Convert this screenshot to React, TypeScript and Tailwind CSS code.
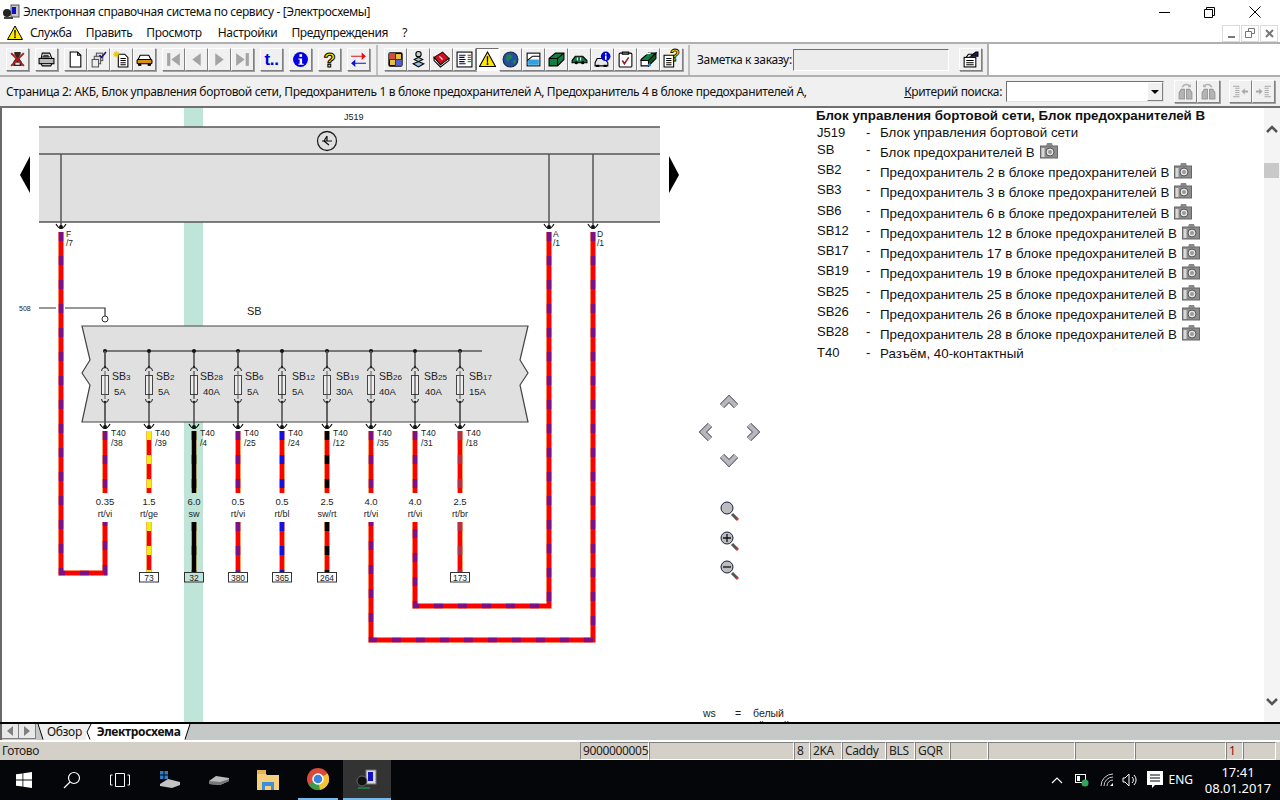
import React from "react";

const ToolBtn: React.FC<{ pressed?: boolean; children?: React.ReactNode; className?: string }> = ({ pressed, children, className }) => (
  <div
    className={`flex h-[23px] w-[23px] shrink-0 items-center justify-center border ${
      pressed
        ? "border-t-[#707070] border-l-[#707070] border-r-white border-b-white bg-white"
        : "border-t-white border-l-white border-r-[#808080] border-b-[#808080] bg-[#f0f0f0] shadow-[1px_1px_0_#a0a0a0]"
    } ${className ?? ""}`}
  >
    {children}
  </div>
);

const Ico: React.FC<{ children: React.ReactNode }> = ({ children }) => (
  <svg width="17" height="17" viewBox="0 0 16 16">
    {children}
  </svg>
);

const ExitIco = () => (
  <Ico>
    <path d="M5 1h6v2l-2 3 3 4v4H4v-4l3-4-2-3z" fill="#3a2020" />
    <path d="M2 2l12 12M14 2L2 14" stroke="#b01818" strokeWidth="1.800" />
    <rect x="6" y="11" width="4" height="2" fill="#ddd" />
  </Ico>
);

const Printer = () => (
  <Ico>
    <path d="M4 2h7l2 5H3z" fill="#fff" stroke="#000" />
    <rect x="1" y="7" width="14" height="5" fill="#bbb" stroke="#000" />
    <path d="M3 12h10l-1 2H4z" fill="#fff" stroke="#000" />
    <path d="M5 4h5M4 5.500h7" stroke="#000" />
  </Ico>
);

const Doc = () => (
  <Ico>
    <path d="M3 1h7l3 3v11H3z" fill="#fff" stroke="#000" />
    <path d="M10 1v3h3" fill="none" stroke="#000" />
  </Ico>
);

const Docs = () => (
  <Ico>
    <rect x="6" y="2" width="6" height="7" fill="#ddd" stroke="#555" />
    <rect x="4" y="5" width="6" height="7" fill="#ddd" stroke="#555" />
    <rect x="2" y="8" width="6" height="7" fill="#eee" stroke="#555" />
    <path d="M9 4l2 2 4-5" fill="none" stroke="#201080" strokeWidth="1.500" />
  </Ico>
);

const DocStar = () => (
  <Ico>
    <path d="M5 3h6l3 3v9H5z" fill="#fff" stroke="#000" />
    <path d="M7 7h5M7 9h5M7 11h5M7 13h5" stroke="#000" />
    <path d="M0 3h6M3 0v6M1 1l4 4M5 1L1 5" stroke="#e8c800" />
  </Ico>
);

const CarFront = ({ color = "#d89018" }: { color?: string }) => (
  <Ico>
    <path d="M4 4h8l2 4H2z" fill="#fff" stroke="#000" />
    <rect x="1" y="8" width="14" height="4" rx="1" fill={color} stroke="#000" />
    <rect x="2" y="12" width="3" height="2" fill="#000" />
    <rect x="11" y="12" width="3" height="2" fill="#000" />
  </Ico>
);

const NavIcon = ({ d, bar }: { d: string; bar?: string }) => (
  <Ico>
    <path d={d} fill="#a4a4a4" />
    {bar && <path d={bar} fill="#a4a4a4" />}
  </Ico>
);

const Info = () => (
  <Ico>
    <circle cx="8" cy="8" r="7" fill="#0000e0" />
    <rect x="7" y="3" width="2.500" height="2.500" fill="#fff" />
    <path d="M6 7h3.500v5H11v1H6v-1h1.200V8H6z" fill="#fff" />
  </Ico>
);

const Quest = () => (
  <span className="font-['Liberation_Sans',sans-serif] text-[20px] leading-none font-bold text-[#f8e000] [-webkit-text-stroke:1px_#000]">?</span>
);

const Arrows = () => (
  <Ico>
    <path d="M1 6h10V3l4 3.500-4 3.500V7H1z" fill="#e01010" transform="translate(0,-1.500)" />
    <path d="M15 10H5V7l-4 3.500L5 14v-3h10z" fill="#1010d0" transform="translate(0,1)" />
  </Ico>
);

const ColorBox = () => (
  <Ico>
    <rect x="2" y="2" width="12" height="12" rx="1" fill="#e8c040" stroke="#000" strokeWidth="1.500" />
    <rect x="2" y="2" width="6" height="6" fill="#d05040" />
    <rect x="8" y="8" width="6" height="6" fill="#5060d0" />
    <path d="M2 8h12M8 2v12" stroke="#503020" />
  </Ico>
);

const Figure = () => (
  <Ico>
    <circle cx="8" cy="3" r="2.500" fill="#ccc" stroke="#000" />
    <path d="M4 8l4-2 4 2-4 2z" fill="#8cc" stroke="#000" />
    <path d="M3 12l5-2 5 2-5 3z" fill="#9bd" stroke="#000" />
  </Ico>
);

const RedBook = () => (
  <Ico>
    <path d="M1 6l8-5 6 6-8 6z" fill="#d01020" stroke="#400" />
    <path d="M1 6v3l6 6 8-6V7l-8 6z" fill="#fff" stroke="#000" />
    <path d="M6 5l3 3" stroke="#fff" />
  </Ico>
);

const ListIco = () => (
  <Ico>
    <rect x="1" y="1" width="14" height="14" fill="#fff" stroke="#000" />
    <path d="M3 4h6M3 6h5M3 8h6M3 10h5M3 12h6" stroke="#000080" />
    <path d="M11 4h3" stroke="#d00" />
    <path d="M11 6h3" stroke="#080" />
    <path d="M11 8h3" stroke="#d00" />
    <path d="M11 10h3" stroke="#080" />
  </Ico>
);

const Warn = ({ size = 17 }: { size?: number }) => (
  <svg width={size} height={size} viewBox="0 0 16 16">
    <path d="M8 1l7.500 13.500H.5z" fill="#ffe800" stroke="#000" />
    <path d="M7.300 5h1.400l-.2 6h-1z" fill="#000" />
    <rect x="7.200" y="11.500" width="1.600" height="1.600" fill="#000" />
  </svg>
);

const Globe = () => (
  <Ico>
    <circle cx="8" cy="8" r="7" fill="#2050a0" stroke="#223" />
    <path d="M4 4l4-1 2 3-3 2-1 3-2-3zM10 9l3-1 0 3-2 2z" fill="#208050" />
  </Ico>
);

const BlueBox = () => (
  <Ico>
    <rect x="2" y="2" width="12" height="12" fill="#fff" stroke="#000" />
    <rect x="3" y="8" width="10" height="5" fill="#30a0e0" />
    <path d="M2 9l5-4M7 5h7" stroke="#000" />
  </Ico>
);

const GreenBlock = () => (
  <Ico>
    <path d="M1 7l6-5h8v6l-6 6H1z" fill="#108040" stroke="#000" />
    <path d="M1 7h8l6-5M9 7v7" stroke="#000" fill="none" />
  </Ico>
);

const GreenCar = () => (
  <Ico>
    <path d="M1 9l3-4h7l4 4v2H1z" fill="#107840" stroke="#000" />
    <circle cx="5" cy="11" r="1.500" fill="#000" />
    <circle cx="11" cy="11" r="1.500" fill="#000" />
    <path d="M6 6v3M9 6v3" stroke="#fff" />
  </Ico>
);

const CarInfo = () => (
  <Ico>
    <path d="M1 11l2-4h7l3 4v3H1z" fill="#e8e8e8" stroke="#000" />
    <rect x="2" y="13" width="3" height="2" fill="#000" />
    <rect x="9" y="13" width="3" height="2" fill="#000" />
    <circle cx="11" cy="5" r="4.500" fill="#0000d0" />
    <rect x="10.300" y="2" width="1.500" height="1.500" fill="#fff" />
    <rect x="10.300" y="4.300" width="1.500" height="4" fill="#fff" />
  </Ico>
);

const Clipboard = () => (
  <Ico>
    <rect x="2" y="2" width="12" height="13" rx="1" fill="#fff" stroke="#000" />
    <rect x="5" y="1" width="6" height="2" fill="#888" stroke="#000" />
    <path d="M5 9l2 3 4-6" fill="none" stroke="#902030" strokeWidth="1.500" />
  </Ico>
);

const GreenBooks = () => (
  <Ico>
    <path d="M1 8l7-6h7l-7 7H1z" fill="#108040" stroke="#000" />
    <path d="M1 9h7v5H1z" fill="#fff" stroke="#000" />
    <path d="M8 9l7-7v5l-7 7z" fill="#0c5c30" stroke="#000" />
    <path d="M4 3l6-1" stroke="#fff" />
    <circle cx="9" cy="13" r="1.500" fill="#3080d0" />
  </Ico>
);

const DocQ = () => (
  <div className="relative h-[17px] w-[17px]">
    <Ico>
      <path d="M1 4h9v11H1z" fill="#fff" stroke="#000" />
      <path d="M3 7h5M3 9h5M3 11h5M3 13h5" stroke="#000" />
    </Ico>
    <span className="absolute -top-[3px] left-[7px] font-['Liberation_Sans',sans-serif] text-[16px] leading-none font-bold text-[#f8e000] [-webkit-text-stroke:0.8px_#000]">?</span>
  </div>
);

const NoteIco = () => (
  <Ico>
    <rect x="2" y="6" width="11" height="9" fill="#fff" stroke="#000" />
    <path d="M4 9h7M4 11h7M4 13h7" stroke="#000" />
    <path d="M8 5l5-4 2 0v4z" fill="#1a1a60" stroke="#000" />
    <path d="M4 6l2-3h4" fill="none" stroke="#000" />
  </Ico>
);

const Binoc = ({ flip }: { flip?: boolean }) => (
  <svg width="17" height="17" viewBox="0 0 16 16" className={flip ? "-scale-x-100" : ""}>
    <path d="M2 15V9l2-3h3v9zM9 15V6h3l2 3v6z" fill="#b4b4b4" stroke="#999" />
    <path d="M5 4a4 4 0 0 1 7-1" fill="none" stroke="#b0b0b0" strokeWidth="1.500" />
    <path d="M13 1v3h-3" fill="#b0b0b0" />
  </svg>
);

const IndentIco = ({ flip }: { flip?: boolean }) => (
  <svg width="17" height="17" viewBox="0 0 16 16" className={flip ? "-scale-x-100" : ""}>
    <path d="M1 3h6M3 5h4M3 7h4M3 9h4M3 11h4M1 13h6" stroke="#a8a8a8" />
    <path d="M9 8l3-3v2h3v2h-3v2z" fill="#a8a8a8" />
  </svg>
);

const Camera = () => (
  <svg width="18" height="17" viewBox="0 0 18 17" className="ml-[5px] shrink-0">
    <rect x="0.500" y="4" width="17" height="12" fill="#8c8c8c" stroke="#666" />
    <rect x="1.500" y="6" width="3" height="9" fill="#d8d8d8" />
    <path d="M6 4l1-3h5l1 3z" fill="#888" />
    <circle cx="10" cy="10" r="4" fill="#e4e4e4" stroke="#555" />
    <circle cx="10" cy="10" r="2" fill="#999" />
  </svg>
);

const rows: { code: string; text: string; cam?: boolean; tall?: boolean }[] = [
  { code: "J519", text: "Блок управления бортовой сети" },
  { code: "SB", text: "Блок предохранителей В", cam: true },
  { code: "SB2", text: "Предохранитель 2 в блоке предохранителей В", cam: true },
  { code: "SB3", text: "Предохранитель 3 в блоке предохранителей В", cam: true, tall: true },
  { code: "SB6", text: "Предохранитель 6 в блоке предохранителей В", cam: true },
  { code: "SB12", text: "Предохранитель 12 в блоке предохранителей В", cam: true },
  { code: "SB17", text: "Предохранитель 17 в блоке предохранителей В", cam: true },
  { code: "SB19", text: "Предохранитель 19 в блоке предохранителей В", cam: true, tall: true },
  { code: "SB25", text: "Предохранитель 25 в блоке предохранителей В", cam: true },
  { code: "SB26", text: "Предохранитель 26 в блоке предохранителей В", cam: true },
  { code: "SB28", text: "Предохранитель 28 в блоке предохранителей В", cam: true, tall: true },
  { code: "T40", text: "Разъём, 40-контактный" },
];

type Fuse = {
  x: number;
  sb: string;
  sbx: number;
  amp: string;
  ampx: number;
  pin: string;
  sec: string;
  col: string;
  dash: string;
  box?: string;
  thick?: boolean;
};

const VI = "#7d1088";

const fuses: Fuse[] = [
  { x: 105, sb: "3", sbx: 112, amp: "5A", ampx: 114, pin: "/38", sec: "0.35", col: "rt/vi", dash: VI, thick: true },
  { x: 149, sb: "2", sbx: 156, amp: "5A", ampx: 158, pin: "/39", sec: "1.5", col: "rt/ge", dash: "#f4ee10", box: "73" },
  { x: 194, sb: "28", sbx: 200, amp: "40A", ampx: 203, pin: "/4", sec: "6.0", col: "sw", dash: "#000000", box: "32" },
  { x: 238, sb: "6", sbx: 245, amp: "5A", ampx: 247, pin: "/25", sec: "0.5", col: "rt/vi", dash: VI, box: "380", thick: true },
  { x: 282, sb: "12", sbx: 292, amp: "5A", ampx: 292, pin: "/24", sec: "0.5", col: "rt/bl", dash: "#1010e8", box: "365" },
  { x: 327, sb: "19", sbx: 336, amp: "30A", ampx: 336, pin: "/12", sec: "2.5", col: "sw/rt", dash: "#000000", box: "264", thick: true },
  { x: 371, sb: "26", sbx: 379, amp: "40A", ampx: 379, pin: "/35", sec: "4.0", col: "rt/vi", dash: VI, thick: true },
  { x: 415, sb: "25", sbx: 424, amp: "40A", ampx: 425, pin: "/31", sec: "4.0", col: "rt/vi", dash: VI },
  { x: 460, sb: "17", sbx: 469, amp: "15A", ampx: 469, pin: "/18", sec: "2.5", col: "rt/br", dash: "#b83048", box: "173", thick: true },
];

const Wire: React.FC<{ d: string; dash: string; base?: string; fringe?: string }> = ({ d, dash, base = "#ff0000", fringe = "#f8a060" }) => (
  <g fill="none">
    <path d={d} stroke={fringe} strokeWidth="5.500" />
    <path d={d} stroke={base} strokeWidth="4.500" />
    <path d={d} stroke={dash} strokeWidth="4.500" strokeDasharray="9 15" />
  </g>
);

const Plug: React.FC<{ x: number; y: number }> = ({ x, y }) => (
  <g>
    <path d={`M${x - 5} ${y - 3}Q${x} ${y + 6} ${x + 5} ${y - 3}`} fill="none" stroke="#111" strokeWidth="1.200" />
    <circle cx={x} cy={y} r="2" fill="#111" />
  </g>
);

const Chevron: React.FC<{ d: string }> = ({ d }) => (
  <g fill="none" strokeLinejoin="miter">
    <path d={d} stroke="#3a3a60" strokeWidth="6" />
    <path d={d} stroke="#b8b8b8" strokeWidth="4.500" />
  </g>
);

const Lens: React.FC<{ y: number; mark?: string }> = ({ y, mark }) => (
  <g>
    <path d={`M732 ${y + 6}L737 ${y + 11}`} stroke="#555" strokeWidth="3" />
    <path d={`M736.500 ${y + 10.500}L738 ${y + 12}`} stroke="#c04040" strokeWidth="3" />
    <circle cx="727" cy={y} r="6" fill="#bcbcbc" stroke="#1a1a4a" />
    {mark && <path d={mark} stroke="#111" strokeWidth="1.300" />}
  </g>
);

const Schematic = () => (
  <svg width="806" height="614" viewBox="2 108 806 614" className="shrink-0 font-['Liberation_Sans',sans-serif]">
    <rect x="184" y="108" width="19" height="614" fill="#bfe5d9" />

    {/* J519 */}
    <text x="344" y="120" fontSize="9" fill="#222">J519</text>
    <rect x="39" y="127" width="621" height="95" fill="#dfe0df" />
    <path d="M39 127H660M39 154H660M39 222H660" stroke="#555" strokeWidth="1.500" />
    <circle cx="327" cy="141" r="9.500" fill="none" stroke="#222" strokeWidth="1.300" />
    <path d="M322 141h10M327 136l-3 5 5 4M327 136v5" stroke="#111" fill="none" strokeWidth="1.200" />
    <path d="M20 175l10-19v37z" fill="#000" />
    <path d="M679 175l-10-19v37z" fill="#000" />
    <path d="M61 154V226M549 154V226M593 154V226" stroke="#555" strokeWidth="1.500" />

    {/* long wires */}
    <Wire d="M61 232V573H105V522" dash={VI} />
    <Wire d="M549 232V606H415V522" dash={VI} />
    <Wire d="M593 232V640H371V522" dash={VI} />
    <Plug x={61} y={227} />
    <Plug x={549} y={227} />
    <Plug x={593} y={227} />
    <text x="66" y="237" fontSize="8.500" fill="#222">F</text>
    <text x="66" y="246" fontSize="8.500" fill="#222">/7</text>
    <text x="553" y="237" fontSize="8.500" fill="#222">A</text>
    <text x="553" y="246" fontSize="8.500" fill="#222">/1</text>
    <text x="597" y="237" fontSize="8.500" fill="#222">D</text>
    <text x="597" y="246" fontSize="8.500" fill="#222">/1</text>

    {/* 508 feed */}
    <text x="19" y="311" fontSize="7" fill="#222">508</text>
    <path d="M39 308H56M65 308H105V316" fill="none" stroke="#333" strokeWidth="1.200" />
    <circle cx="105" cy="319" r="3" fill="#fff" stroke="#333" />

    {/* SB */}
    <text x="247" y="315" fontSize="11" fill="#222">SB</text>
    <path d="M82 326H528L520 360 528 373 520 385 528 422H82L90 385 82 373 90 360Z" fill="#dfe0df" stroke="#444" strokeWidth="1.200" />
    <path d="M105 351H482" stroke="#111" strokeWidth="1" />
    {fuses.map((f) => {
      const line = f.thick ? "#555" : "#222";
      const lw = f.thick ? 1.8 : 1.2;
      return (
        <g key={f.x}>
          <circle cx={f.x} cy="351" r="2" fill="#111" />
          <path d={`M${f.x} 351V366M${f.x} 403V426`} stroke={line} strokeWidth={lw} />
          <path d={`M${f.x - 3.5} 371a3.500 3.500 0 0 1 7 0M${f.x - 3.5} 399a3.500 3.500 0 0 0 7 0`} fill="none" stroke="#222" />
          <circle cx={f.x} cy="367" r="1.200" fill="#222" />
          <circle cx={f.x} cy="402" r="1.200" fill="#222" />
          <rect x={f.x - 3.5} y="375.500" width="7" height="19" fill="#eee" stroke="#444" />
          <path d={`M${f.x} 371V399`} stroke={line} />
          <text x={f.sbx} y="380" fontSize="10.500" fill="#222">
            SB<tspan fontSize="8">{f.sb}</tspan>
          </text>
          <text x={f.ampx} y="394.500" fontSize="9.500" fill="#222">{f.amp}</text>
          <text x={f.x + 6} y="436" fontSize="8.500" fill="#222">T40</text>
          <text x={f.x + 6} y="446" fontSize="8.500" fill="#222">{f.pin}</text>
          <Wire d={`M${f.x} 431V493`} dash={f.dash} base={f.col === "sw" ? "#000000" : "#ff0000"} fringe="#f0d070" />
          <text x={f.x} y="505" fontSize="9.500" textAnchor="middle" fill="#222">{f.sec}</text>
          <text x={f.x} y="517" fontSize="9" textAnchor="middle" fill="#222">{f.col}</text>
          {f.box && <Wire d={`M${f.x} 522V572`} dash={f.dash} base={f.col === "sw" ? "#000000" : "#ff0000"} fringe="#f0d070" />}
          {f.box && (
            <g>
              <rect x={f.x - 9.5} y="572.500" width="19" height="9.500" fill={f.x === 194 ? "#bfe5d9" : "#fff"} stroke="#333" />
              <text x={f.x} y="581" fontSize="8.500" textAnchor="middle" fill="#222">{f.box}</text>
            </g>
          )}
          <Plug x={f.x} y={427} />
        </g>
      );
    })}

    {/* nav pad */}
    <Chevron d="M722 406L729 399 736 406" />
    <Chevron d="M710 425L703 432 710 439" />
    <Chevron d="M749 425L756 432 749 439" />
    <Chevron d="M722 456L729 463 736 456" />
    <Lens y={508} />
    <Lens y={538} mark="M723 538h8M727 534v8" />
    <Lens y={567} mark="M723 567h8" />

    {/* legend, runs off the bottom */}
    <text x="703" y="717" fontSize="10.500" fill="#222">ws</text>
    <text x="735" y="717" fontSize="10.500" fill="#222">=</text>
    <text x="753" y="717" fontSize="10.500" fill="#222">белый</text>
    <text x="753" y="729" fontSize="10.500" fill="#222">чёрный</text>
  </svg>
);

const Pane: React.FC<{ w: string; children?: React.ReactNode; red?: boolean }> = ({ w, children, red }) => (
  <div className={`flex h-[18px] shrink-0 items-center border border-t-[#808080] border-l-[#808080] border-r-white border-b-white px-[2px] whitespace-nowrap ${w} ${red ? "text-[#8a1010]" : "text-[#222]"}`}>
    {children}
  </div>
);

const WinLogo = () => (
  <svg width="16" height="16" viewBox="0 0 16 16">
    <path d="M0 2.300l6.500-.9v6.200H0zM7.300 1.300L16 0v7.600H7.300zM0 8.400h6.500v6.200L0 13.700zM7.300 8.400H16V16l-8.700-1.300z" fill="#fff" />
  </svg>
);

export default function App() {
  return (
    <div className="flex h-[800px] w-[1280px] flex-col overflow-hidden bg-white font-['Noto_Sans',sans-serif] text-[12px] tracking-[-0.35px] text-[#111]">
      {/* title bar */}
      <div className="flex h-[24px] shrink-0 items-center bg-white pl-[2px]">
        <svg width="18" height="16" viewBox="0 0 18 16" className="shrink-0">
          <rect x="9" y="1" width="8" height="12" fill="#c8c8c8" stroke="#555" />
          <rect x="10" y="3" width="4" height="7" fill="#1010c0" />
          <circle cx="5" cy="9" r="4" fill="#222" />
          <path d="M2 14h9" stroke="#444" strokeWidth="2" />
        </svg>
        <span className="ml-[3px]">Электронная справочная система по сервису - [Электросхемы]</span>
        <div className="ml-auto flex items-center">
          <div className="h-px w-[11px] bg-black" />
          <svg width="11" height="11" viewBox="0 0 11 11" className="ml-[34px]">
            <path d="M.5 2.500h8v8h-8zM2.500 2.500v-2h8v8h-2" fill="none" stroke="#000" />
          </svg>
          <svg width="12" height="12" viewBox="0 0 12 12" className="mr-[19px] ml-[34px]">
            <path d="M.5.5l11 11M11.500.5l-11 11" stroke="#000" />
          </svg>
        </div>
      </div>

      {/* menu */}
      <div className="flex h-[18px] shrink-0 items-center bg-white pl-[7px]">
        <Warn size={16} />
        <span className="ml-[7px]">Служба</span>
        <span className="ml-[14px]">Править</span>
        <span className="ml-[14px]">Просмотр</span>
        <span className="ml-[16px]">Настройки</span>
        <span className="ml-[14px]">Предупреждения</span>
        <span className="ml-[14px]">?</span>
        <div className="ml-auto mr-[2px] flex gap-[1px] text-[#777]">
          <div className="flex h-[17px] w-[18px] items-end justify-center border border-[#dcdcdc] pb-[3px]">
            <div className="h-[2px] w-[7px] bg-[#777]" />
          </div>
          <div className="flex h-[17px] w-[18px] items-center justify-center border border-[#dcdcdc]">
            <svg width="10" height="10" viewBox="0 0 10 10">
              <path d="M.5 3.500h6v6h-6zM3.500 3.500v-3h6v5h-3" fill="none" stroke="#777" />
            </svg>
          </div>
          <div className="flex h-[17px] w-[18px] items-center justify-center border border-[#dcdcdc]">
            <svg width="9" height="9" viewBox="0 0 9 9">
              <path d="M1 1l7 7M8 1L1 8" stroke="#777" strokeWidth="2" />
            </svg>
          </div>
        </div>
      </div>

      {/* toolbar */}
      <div className="flex h-[33px] shrink-0 border-t-2 border-[#b0b0b0] bg-white">
        <div className="flex w-[989px] shrink-0 items-center border-r-2 border-[#b0b0b0] bg-[#f0f0f0] pl-[6px]">
          <ToolBtn><ExitIco /></ToolBtn>
          <ToolBtn className="ml-[6px]"><Printer /></ToolBtn>
          <ToolBtn className="ml-[6px]"><Doc /></ToolBtn>
          <ToolBtn><Docs /></ToolBtn>
          <ToolBtn><DocStar /></ToolBtn>
          <ToolBtn><CarFront /></ToolBtn>
          <ToolBtn className="ml-[6px]"><NavIcon d="M14 2v12L6 8z" bar="M2 2h3v12H2z" /></ToolBtn>
          <ToolBtn><NavIcon d="M12 2v12L4 8z" /></ToolBtn>
          <ToolBtn><NavIcon d="M4 2v12l8-6z" /></ToolBtn>
          <ToolBtn><NavIcon d="M2 2v12l8-6z" bar="M11 2h3v12h-3z" /></ToolBtn>
          <ToolBtn className="ml-[6px]">
            <span className="font-['Liberation_Sans',sans-serif] text-[17px] leading-none font-bold text-[#0000d8]">t..</span>
          </ToolBtn>
          <ToolBtn className="ml-[6px]"><Info /></ToolBtn>
          <ToolBtn className="ml-[6px]"><Quest /></ToolBtn>
          <ToolBtn className="ml-[6px]"><Arrows /></ToolBtn>
          <div className="mr-[6px] ml-[6px] h-[30px] w-[2px] bg-[#c0c0c0]" />
          <ToolBtn><ColorBox /></ToolBtn>
          <ToolBtn><Figure /></ToolBtn>
          <ToolBtn><RedBook /></ToolBtn>
          <ToolBtn><ListIco /></ToolBtn>
          <ToolBtn pressed><Warn /></ToolBtn>
          <ToolBtn><Globe /></ToolBtn>
          <ToolBtn><BlueBox /></ToolBtn>
          <ToolBtn><GreenBlock /></ToolBtn>
          <ToolBtn><GreenCar /></ToolBtn>
          <ToolBtn><CarInfo /></ToolBtn>
          <ToolBtn><Clipboard /></ToolBtn>
          <ToolBtn><GreenBooks /></ToolBtn>
          <ToolBtn><DocQ /></ToolBtn>
          <div className="mr-[7px] ml-[5px] h-[30px] w-[2px] bg-[#c0c0c0]" />
          <span className="w-[96px] shrink-0 whitespace-nowrap">Заметка к заказу:</span>
          <div className="h-[22px] w-[156px] shrink-0 border border-t-[#707070] border-l-[#707070] border-r-white border-b-white bg-[#ececec]" />
          <ToolBtn className="ml-[10px]"><NoteIco /></ToolBtn>
        </div>
      </div>

      {/* page line */}
      <div className="flex h-[33px] shrink-0 items-center border-t-2 border-b-2 border-t-[#b0b0b0] border-b-[#707070] bg-[#f0f0f0] pl-[6px]">
        <span className="whitespace-nowrap">Страница 2: АКБ, Блок управления бортовой сети, Предохранитель 1 в блоке предохранителей А, Предохранитель 4 в блоке предохранителей А,</span>
        <span className="ml-auto"><span className="underline">К</span>ритерий поиска:</span>
        <div className="ml-[4px] flex h-[21px] w-[158px] justify-end border border-t-[#707070] border-l-[#707070] border-r-[#e0e0e0] border-b-[#e0e0e0] bg-white">
          <div className="flex h-full w-[16px] items-center justify-center border-t border-l border-white border-r border-r-[#808080] border-b border-b-[#808080] bg-[#f0f0f0]">
            <div className="h-0 w-0 border-x-[4px] border-t-[4px] border-x-transparent border-t-black" />
          </div>
        </div>
        <ToolBtn className="ml-[10px]"><Binoc /></ToolBtn>
        <ToolBtn><Binoc flip /></ToolBtn>
        <ToolBtn className="ml-[9px]"><IndentIco /></ToolBtn>
        <ToolBtn className="mr-[5px]"><IndentIco flip /></ToolBtn>
      </div>

      {/* content */}
      <div className="flex min-h-0 flex-1 border-l-2 border-[#696969] bg-white tracking-normal">
        <Schematic />
        <div className="flex-1 pl-[8px] font-['Liberation_Sans',sans-serif]">
          <div className="h-[17px] text-[13.330px] leading-[15px] font-bold">Блок управления бортовой сети, Блок предохранителей В</div>
          {rows.map((r) => (
            <div key={r.code} className={`flex items-start ${r.tall ? "h-[21px]" : r.code === "J519" ? "h-[17px]" : "h-[20px]"}`}>
              <span className="w-[50px] shrink-0 pl-[1px] text-[13px] leading-[15px]">{r.code}</span>
              <span className="w-[14px] shrink-0 text-[13px] leading-[15px]">-</span>
              <span className={`flex items-center text-[13.330px] leading-[15px] whitespace-nowrap ${r.code === "J519" ? "" : r.code === "T40" ? "mt-[1px]" : "mt-[3px]"}`}>
                {r.text}
                {r.cam && <span className="-mt-[4px] flex"><Camera /></span>}
              </span>
            </div>
          ))}
        </div>
        <div className="relative w-[16px] shrink-0 bg-[#f4f4f4]">
          <svg width="16" height="12" viewBox="0 0 16 12" className="mt-[15px]">
            <path d="M3 9l5-5 5 5" fill="none" stroke="#555" strokeWidth="2.500" />
          </svg>
          <div className="mt-[28px] h-[15px] w-[15px] bg-[#c8c8c8]" />
          <svg width="16" height="12" viewBox="0 0 16 12" className="absolute bottom-[14px] left-0">
            <path d="M3 3l5 5 5-5" fill="none" stroke="#555" strokeWidth="2.500" />
          </svg>
        </div>
      </div>

      {/* sheet tabs */}
      <div className="flex h-[18px] shrink-0 items-stretch border-t-2 border-black bg-[#c4c8c6]">
        <div className="flex w-[2px] bg-[#696969]" />
        <div className="flex h-[15px] w-[17px] items-center justify-center border-r border-b border-[#808080] bg-[#e8e8e8]">
          <div className="h-0 w-0 border-y-[5px] border-r-[6px] border-y-transparent border-r-[#808080]" />
        </div>
        <div className="flex h-[15px] w-[17px] items-center justify-center border-r border-b border-[#808080] bg-[#e8e8e8]">
          <div className="h-0 w-0 border-y-[5px] border-l-[6px] border-y-transparent border-l-[#808080]" />
        </div>
        <div className="ml-[1px] flex h-[16px] items-center">
          <svg width="10" height="16" viewBox="0 0 10 16">
            <path d="M0 0h10v16H6z" fill="#eee" />
            <path d="M1 0l5 15.500" stroke="#000" />
          </svg>
          <span className="bg-[#eee] pr-[4px] leading-[16px]">Обзор</span>
          <svg width="11" height="16" viewBox="0 0 11 16" className="shrink-0">
            <path d="M0 0h11v16H0z" fill="#fff" />
            <path d="M0 16V0h4l-4 8z" fill="#eee" />
            <path d="M5 0L1 8l3 7.500" fill="none" stroke="#000" />
          </svg>
          <span className="bg-white pr-[2px] leading-[16px] font-bold">Электросхема</span>
          <svg width="8" height="16" viewBox="0 0 8 16">
            <path d="M0 0h7L2 16H0z" fill="#fff" />
            <path d="M7 0L2 15.500" stroke="#000" />
          </svg>
        </div>
      </div>

      {/* status */}
      <div className="flex h-[20px] shrink-0 items-center border-t-2 border-white bg-[#d4d0c8]">
        <div className="w-[580px] shrink-0 pl-[2px] text-[#222]">Готово</div>
        <Pane w="w-[69px]">9000000005</Pane>
        <Pane w="w-[145px]" />
        <Pane w="w-[16px]">8</Pane>
        <Pane w="w-[32px]">2KA</Pane>
        <Pane w="w-[44px]">Caddy</Pane>
        <Pane w="w-[29px]">BLS</Pane>
        <Pane w="w-[35px]">GQR</Pane>
        <Pane w="w-[38px]" />
        <Pane w="w-[87px]" />
        <Pane w="w-[60px]" />
        <Pane w="w-[91px]" />
        <Pane w="w-[17px]" red>1</Pane>
        <Pane w="w-[33px]" />
      </div>

      {/* taskbar */}
      <div className="flex h-[40px] shrink-0 items-center bg-[#05060a] tracking-normal text-white">
        <div className="ml-[16px] flex"><WinLogo /></div>
        <svg width="18" height="18" viewBox="0 0 18 18" className="ml-[31px]">
          <circle cx="11" cy="7" r="5.500" fill="none" stroke="#fff" strokeWidth="1.200" />
          <path d="M7 11l-6 6" stroke="#fff" strokeWidth="1.200" />
        </svg>
        <svg width="20" height="16" viewBox="0 0 20 16" className="ml-[29px]">
          <path d="M5.500 1.500h9v13h-9zM2.500 3H.5v10h2M17.500 3h2v10h-2" fill="none" stroke="#fff" />
        </svg>
        <svg width="22" height="20" viewBox="0 0 22 20" className="ml-[29px]">
          <path d="M1 14l8-5 12 3v3l-8 3-12-2z" fill="#c4c4c4" />
          <rect x="1" y="1" width="8" height="8" fill="#2e7cc8" />
          <path d="M5 1v8M1 5h8" stroke="#05060a" />
        </svg>
        <svg width="22" height="12" viewBox="0 0 22 12" className="ml-[27px]">
          <path d="M1 7l7-5 13 2v3l-9 4-11-1z" fill="#bcbcbc" />
          <path d="M1 7l11 1 9-3v2l-9 4-11-1z" fill="#777" />
        </svg>
        <svg width="22" height="20" viewBox="0 0 22 20" className="ml-[27px]">
          <path d="M0 3h8l2 2h12v15H0z" fill="#f4cf7c" />
          <rect x="0" y="0" width="9" height="4" fill="#e6b450" />
          <path d="M5 20v-8h12v8h-3v-4H8v4z" fill="#3b8fd8" />
        </svg>
        <div className="ml-[19px] flex h-full w-[40px] items-center justify-center border-b-2 border-[#76b9ed]">
          <svg width="22" height="22" viewBox="0 0 22 22">
            <circle cx="11" cy="11" r="11" fill="#d84a3a" />
            <path d="M11 11L1.500 16.500A11 11 0 0 0 11 22h2z" fill="#3d9b4a" />
            <path d="M11 11l9.500-5.500A11 11 0 0 1 13 22z" fill="#f2c530" />
            <circle cx="11" cy="11" r="5" fill="#3a82e0" stroke="#fff" strokeWidth="1.500" />
          </svg>
        </div>
        <div className="ml-[5px] flex h-full w-[48px] items-center justify-center border-b-2 border-[#76b9ed] bg-[#333]">
          <svg width="24" height="22" viewBox="0 0 24 22">
            <rect x="11" y="2" width="10" height="14" fill="#d8d8d8" stroke="#777" />
            <rect x="13" y="4" width="5" height="9" fill="#1010c0" />
            <circle cx="7" cy="13" r="5" fill="#111" stroke="#666" />
            <path d="M3 20h12" stroke="#1b7a44" strokeWidth="2" />
          </svg>
        </div>
        <div className="ml-auto flex items-center">
          <svg width="12" height="8" viewBox="0 0 12 8">
            <path d="M1 7l5-5 5 5" fill="none" stroke="#fff" strokeWidth="1.200" />
          </svg>
          <svg width="14" height="14" viewBox="0 0 14 14" className="ml-[12px]">
            <rect x=".5" y="1.500" width="10" height="8" fill="none" stroke="#fff" />
            <rect x="2" y="3" width="3" height="5" fill="#fff" />
            <circle cx="10" cy="10" r="3.500" fill="#2ea55a" />
          </svg>
          <svg width="14" height="14" viewBox="0 0 14 14" className="ml-[11px]">
            <path d="M1 13A12 12 0 0 1 13 1M4 13a9 9 0 0 1 9-9M7 13a6 6 0 0 1 6-6" fill="none" stroke="#c8c8c8" />
            <path d="M10 13l3-3v3z" fill="#fff" />
          </svg>
          <svg width="16" height="14" viewBox="0 0 16 14" className="ml-[8px]">
            <path d="M1 5h2l4-4v12l-4-4H1z" fill="none" stroke="#fff" />
            <path d="M10 4a4 4 0 0 1 0 6M12 2a7 7 0 0 1 0 10" fill="none" stroke="#fff" />
          </svg>
          <svg width="16" height="18" viewBox="0 0 16 18" className="ml-[9px]">
            <path d="M0 0h16v14H8l-3 3v-3H0z" fill="#fff" />
            <path d="M3 4h10M3 7h10M3 10h10" stroke="#05060a" />
          </svg>
          <span className="ml-[5px] text-[12px]">ENG</span>
          <div className="mr-[14px] ml-[17px] flex w-[56px] flex-col items-center text-[13px] leading-[16px]">
            <span>17:41</span>
            <span>08.01.2017</span>
          </div>
        </div>
      </div>
    </div>
  );
}
